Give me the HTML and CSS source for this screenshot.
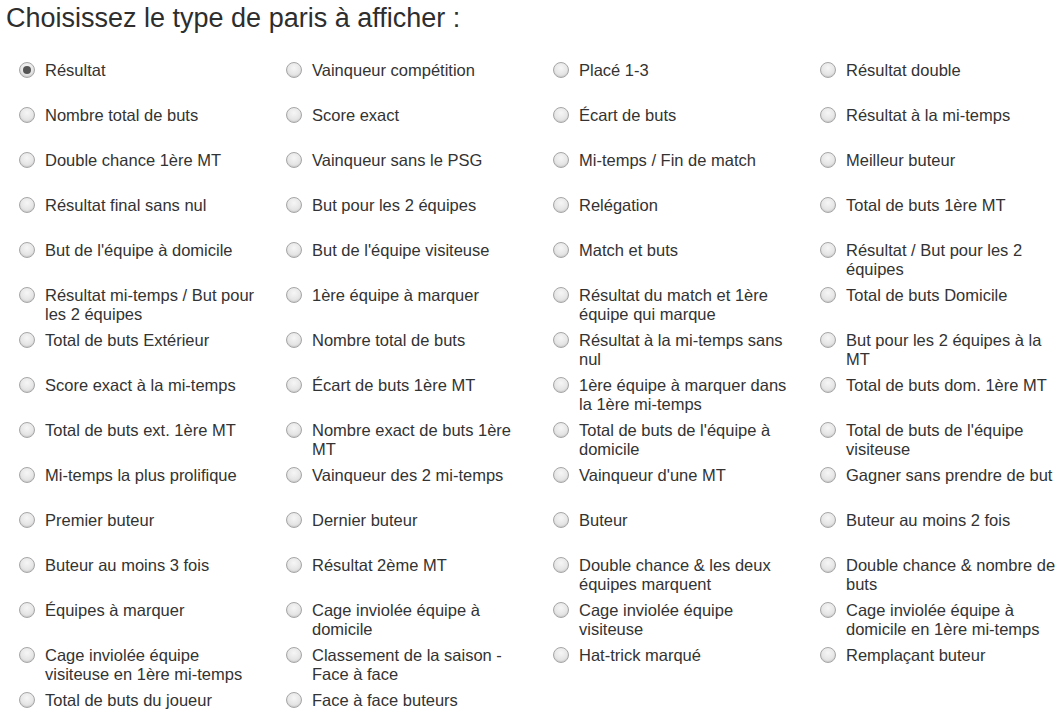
FILE: index.html
```html
<!DOCTYPE html>
<html lang="fr">
<head>
<meta charset="utf-8">
<title>Types de paris</title>
<link rel="stylesheet" href="styles.css">
</head>
<body>
<div class="page">
  <h1 class="title">Choisissez le type de paris à afficher :</h1>
  <div class="grid">
    <label class="opt"><span class="radio checked"></span><span class="lbl">Résultat</span></label>
    <label class="opt"><span class="radio"></span><span class="lbl">Vainqueur compétition</span></label>
    <label class="opt"><span class="radio"></span><span class="lbl">Placé 1-3</span></label>
    <label class="opt"><span class="radio"></span><span class="lbl">Résultat double</span></label>

    <label class="opt"><span class="radio"></span><span class="lbl">Nombre total de buts</span></label>
    <label class="opt"><span class="radio"></span><span class="lbl">Score exact</span></label>
    <label class="opt"><span class="radio"></span><span class="lbl">Écart de buts</span></label>
    <label class="opt"><span class="radio"></span><span class="lbl">Résultat à la mi-temps</span></label>

    <label class="opt"><span class="radio"></span><span class="lbl">Double chance 1ère MT</span></label>
    <label class="opt"><span class="radio"></span><span class="lbl">Vainqueur sans le PSG</span></label>
    <label class="opt"><span class="radio"></span><span class="lbl">Mi-temps / Fin de match</span></label>
    <label class="opt"><span class="radio"></span><span class="lbl">Meilleur buteur</span></label>

    <label class="opt"><span class="radio"></span><span class="lbl">Résultat final sans nul</span></label>
    <label class="opt"><span class="radio"></span><span class="lbl">But pour les 2 équipes</span></label>
    <label class="opt"><span class="radio"></span><span class="lbl">Relégation</span></label>
    <label class="opt"><span class="radio"></span><span class="lbl">Total de buts 1ère MT</span></label>

    <label class="opt"><span class="radio"></span><span class="lbl">But de l'équipe à domicile</span></label>
    <label class="opt"><span class="radio"></span><span class="lbl">But de l'équipe visiteuse</span></label>
    <label class="opt"><span class="radio"></span><span class="lbl">Match et buts</span></label>
    <label class="opt"><span class="radio"></span><span class="lbl">Résultat / But pour les 2 équipes</span></label>

    <label class="opt"><span class="radio"></span><span class="lbl">Résultat mi-temps / But pour les 2 équipes</span></label>
    <label class="opt"><span class="radio"></span><span class="lbl">1ère équipe à marquer</span></label>
    <label class="opt"><span class="radio"></span><span class="lbl">Résultat du match et 1ère équipe qui marque</span></label>
    <label class="opt"><span class="radio"></span><span class="lbl">Total de buts Domicile</span></label>

    <label class="opt"><span class="radio"></span><span class="lbl">Total de buts Extérieur</span></label>
    <label class="opt"><span class="radio"></span><span class="lbl">Nombre total de buts</span></label>
    <label class="opt"><span class="radio"></span><span class="lbl">Résultat à la mi-temps sans nul</span></label>
    <label class="opt"><span class="radio"></span><span class="lbl">But pour les 2 équipes à la MT</span></label>

    <label class="opt"><span class="radio"></span><span class="lbl">Score exact à la mi-temps</span></label>
    <label class="opt"><span class="radio"></span><span class="lbl">Écart de buts 1ère MT</span></label>
    <label class="opt"><span class="radio"></span><span class="lbl">1ère équipe à marquer dans la 1ère mi-temps</span></label>
    <label class="opt"><span class="radio"></span><span class="lbl">Total de buts dom. 1ère MT</span></label>

    <label class="opt"><span class="radio"></span><span class="lbl">Total de buts ext. 1ère MT</span></label>
    <label class="opt"><span class="radio"></span><span class="lbl">Nombre exact de buts 1ère MT</span></label>
    <label class="opt"><span class="radio"></span><span class="lbl">Total de buts de l'équipe à domicile</span></label>
    <label class="opt"><span class="radio"></span><span class="lbl">Total de buts de l'équipe visiteuse</span></label>

    <label class="opt"><span class="radio"></span><span class="lbl">Mi-temps la plus prolifique</span></label>
    <label class="opt"><span class="radio"></span><span class="lbl">Vainqueur des 2 mi-temps</span></label>
    <label class="opt"><span class="radio"></span><span class="lbl">Vainqueur d'une MT</span></label>
    <label class="opt"><span class="radio"></span><span class="lbl">Gagner sans prendre de but</span></label>

    <label class="opt"><span class="radio"></span><span class="lbl">Premier buteur</span></label>
    <label class="opt"><span class="radio"></span><span class="lbl">Dernier buteur</span></label>
    <label class="opt"><span class="radio"></span><span class="lbl">Buteur</span></label>
    <label class="opt"><span class="radio"></span><span class="lbl">Buteur au moins 2 fois</span></label>

    <label class="opt"><span class="radio"></span><span class="lbl">Buteur au moins 3 fois</span></label>
    <label class="opt"><span class="radio"></span><span class="lbl">Résultat 2ème MT</span></label>
    <label class="opt"><span class="radio"></span><span class="lbl">Double chance &amp; les deux équipes marquent</span></label>
    <label class="opt"><span class="radio"></span><span class="lbl">Double chance &amp; nombre de buts</span></label>

    <label class="opt"><span class="radio"></span><span class="lbl">Équipes à marquer</span></label>
    <label class="opt"><span class="radio"></span><span class="lbl">Cage inviolée équipe à domicile</span></label>
    <label class="opt"><span class="radio"></span><span class="lbl">Cage inviolée équipe visiteuse</span></label>
    <label class="opt"><span class="radio"></span><span class="lbl">Cage inviolée équipe à domicile en 1ère mi-temps</span></label>

    <label class="opt"><span class="radio"></span><span class="lbl">Cage inviolée équipe visiteuse en 1ère mi-temps</span></label>
    <label class="opt"><span class="radio"></span><span class="lbl">Classement de la saison - Face à face</span></label>
    <label class="opt"><span class="radio"></span><span class="lbl">Hat-trick marqué</span></label>
    <label class="opt"><span class="radio"></span><span class="lbl">Remplaçant buteur</span></label>

    <label class="opt"><span class="radio"></span><span class="lbl">Total de buts du joueur</span></label>
    <label class="opt"><span class="radio"></span><span class="lbl">Face à face buteurs</span></label>
  </div>
</div>
</body>
</html>
```

FILE: styles.css
```css
html, body {
  margin: 0;
  padding: 0;
  background: #ffffff;
  overflow: hidden;
}

.page {
  font-family: "Liberation Sans", Arial, sans-serif;
  color: #333333;
  padding: 0 0 0 6px;
}

.title {
  margin: 0;
  padding-top: 2px;
  font-size: 27px;
  font-weight: normal;
  line-height: 32px;
  color: #2e2e2e;
}

.grid {
  display: grid;
  grid-template-columns: 267px 267px 267px 1fr;
  grid-auto-rows: 45px;
  margin-top: 27px;
  padding-left: 13px;
}

.opt {
  display: flex;
  align-items: flex-start;
  gap: 10px;
  font-size: 16.5px;
  line-height: 19px;
}

.radio {
  flex: none;
  box-sizing: border-box;
  width: 16px;
  height: 16px;
  margin-top: 1px;
  border-radius: 50%;
  border: 1px solid #a6a6a6;
  background: radial-gradient(circle at 50% 35%, #f6f6f6 0%, #e6e6e6 55%, #d4d4d4 100%);
  box-shadow: inset 0 -1px 1px rgba(0, 0, 0, 0.08);
  position: relative;
}

.radio.checked::after {
  content: "";
  position: absolute;
  left: 3px;
  top: 3px;
  width: 8px;
  height: 8px;
  border-radius: 50%;
  background: #555555;
}

.lbl {
  max-width: 218px;
}
```
